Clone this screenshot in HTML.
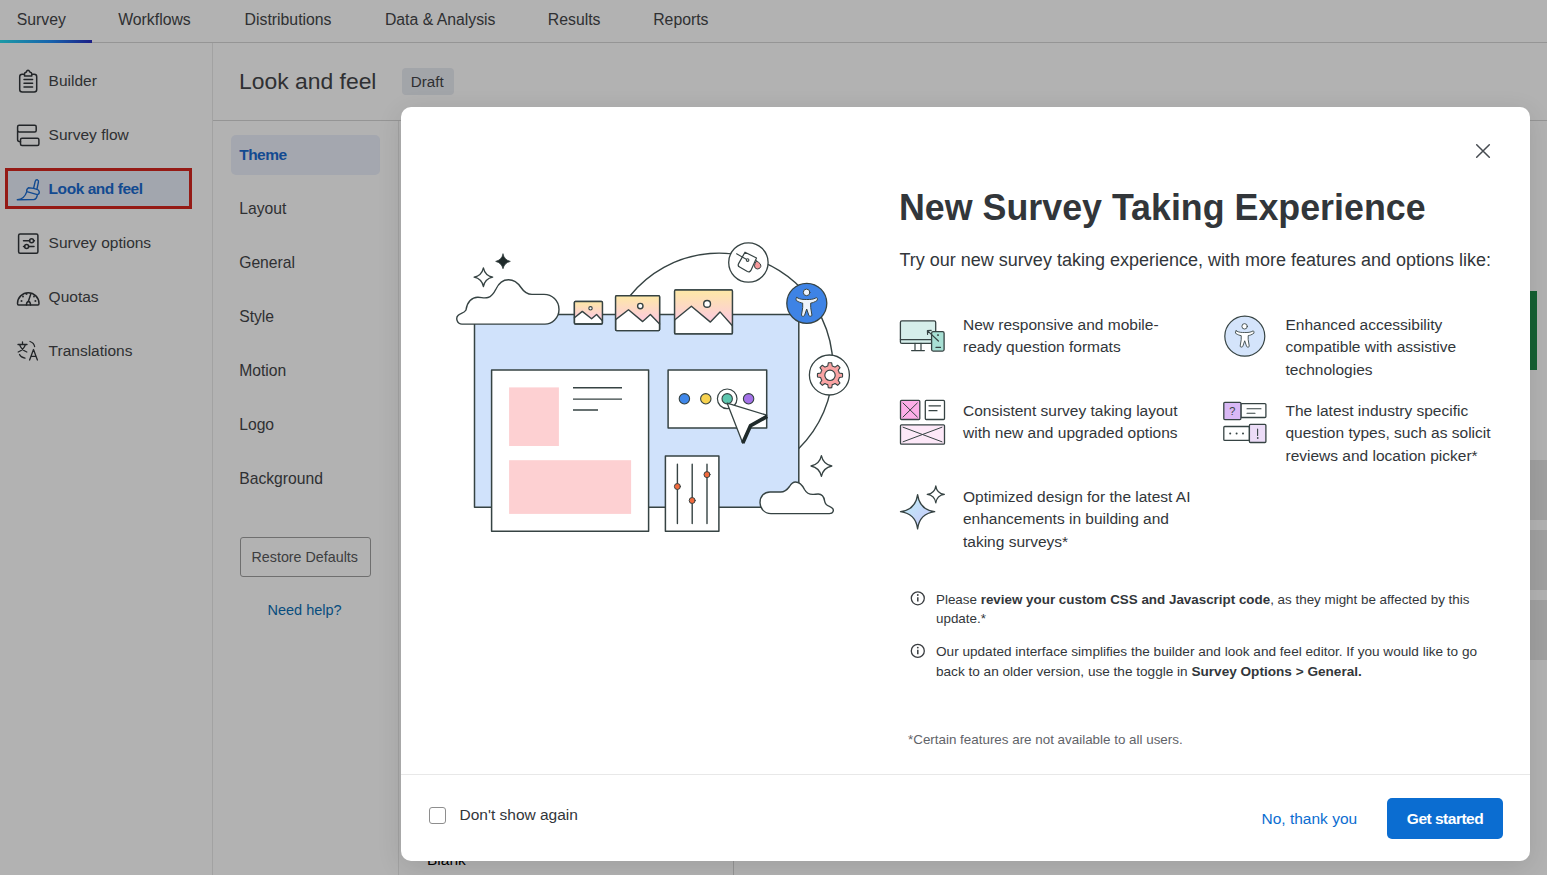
<!DOCTYPE html>
<html><head><meta charset="utf-8">
<style>
*{box-sizing:border-box;margin:0;padding:0}
html,body{width:1547px;height:875px;overflow:hidden;background:#fff;font-family:"Liberation Sans",sans-serif;color:#32363a}
.abs{position:absolute}
#app{position:absolute;left:0;top:0;width:1547px;height:875px;background:#fff}
.nav{position:absolute;left:0;top:0;width:1547px;height:43px;border-bottom:1px solid #dadada}
.nav span{position:absolute;top:11px;font-size:15.5px;color:#32363a;white-space:nowrap}
.side{position:absolute;left:0;top:43px;width:213px;height:832px;border-right:1px solid #e3e3e3}
.si{position:absolute;left:49px;font-size:15.5px;color:#32363a;white-space:nowrap}
.hdr{position:absolute;left:213px;top:43px;width:1334px;height:78px;border-bottom:1px solid #dadada}
.tp{position:absolute;left:213px;top:121px;width:186px;height:754px;border-right:1px solid #e3e3e3}
.ti{position:absolute;left:27px;font-size:15.5px;color:#32363a;white-space:nowrap}
#ov{position:absolute;left:0;top:0;width:1547px;height:875px;background:rgba(0,0,0,0.3)}
#modal{position:absolute;left:401px;top:107.2px;width:1129px;height:754px;background:#fff;border-radius:10px;box-shadow:0 6px 26px rgba(0,0,0,0.11)}
.ft{position:absolute;font-size:15.5px;line-height:22.5px;color:#32363a;white-space:nowrap}
.nt{position:absolute;font-size:13.4px;line-height:19.5px;color:#32363a;white-space:nowrap}
.tx{position:absolute;line-height:1;white-space:nowrap;color:#444649}
</style></head><body>
<div id="app">
<div class="abs" style="left:0;top:42px;width:1547px;height:1px;background:#d6d6d6"></div>
<div class="abs" style="left:212px;top:43px;width:1px;height:832px;background:#e9e9e9"></div>
<div class="abs" style="left:213px;top:120px;width:1334px;height:1px;background:#d6d6d6"></div>
<div class="abs" style="left:398px;top:121px;width:1px;height:754px;background:#e9e9e9"></div>
<div class="tx" style="left:16.7px;top:11.83px;font-size:15.8px">Survey</div>
<div class="tx" style="left:118.2px;top:11.83px;font-size:15.8px">Workflows</div>
<div class="tx" style="left:244.6px;top:11.83px;font-size:15.8px">Distributions</div>
<div class="tx" style="left:384.9px;top:11.83px;font-size:15.8px">Data &amp; Analysis</div>
<div class="tx" style="left:547.8000000000001px;top:11.83px;font-size:15.8px">Results</div>
<div class="tx" style="left:653.2px;top:11.83px;font-size:15.8px">Reports</div>
<div class="abs" style="left:5px;top:168px;width:187px;height:41px;background:#e9eef9"></div>
<svg class="abs" style="left:0;top:0" width="213" height="400" viewBox="0 0 213 400">
<g fill="none" stroke="#32363a" stroke-width="1.5" stroke-linejoin="round" stroke-linecap="round">
<!-- builder clipboard -->
<path d="M24.5,74.2 H22.2 Q19.7,74.2 19.7,76.7 V89.5 Q19.7,92 22.2,92 H34.2 Q36.7,92 36.7,89.5 V76.7 Q36.7,74.2 34.2,74.2 H31.8 M24.5,74.2 Q24.5,72.5 26,72.3 Q27,70.3 28,70.3 Q29,70.3 30.2,72.3 Q31.8,72.5 31.8,74.2 V76 H24.5Z"/>
<path d="M24,79.6 H32.6 M24,83.3 H32.6 M24,87.1 H32.6"/>
<!-- survey flow -->
<rect x="17.6" y="125.2" width="18.6" height="6.8" rx="1.5"/>
<rect x="20.5" y="138.3" width="18.4" height="7.1" rx="1.5"/>
<path d="M17.6,131 V139.8 Q17.6,141.8 20.5,141.8"/>
<!-- brush -->
<path stroke="#1a6bd0" stroke-width="1.4" d="M33.6,188.4 L35.2,181.4 Q35.8,179.4 37.4,179.8 Q38.9,180.3 38.4,182.2 L36.9,189.4"/>
<path stroke="#1a6bd0" stroke-width="1.4" d="M28.4,187.8 Q26.2,189.2 26.8,191.6 L37.4,194.6 Q39.6,194.2 39.2,191.6 Q38.8,189.8 36.9,189.4 L33.6,188.4 Z M26.8,191.6 C25.2,196.5 22.5,199.5 17.3,199.7 L33.5,199.6 Q36.8,199.3 37.4,194.6"/>
<!-- survey options -->
<rect x="18.6" y="234.1" width="19.3" height="19.1" rx="1.5"/>
<path d="M23.5,240.8 H29.6 M33.6,240.8 H34.4 M23.5,246.6 H24.6 M28.6,246.6 H34"/>
<circle cx="31.6" cy="240.8" r="2"/>
<circle cx="26.6" cy="246.6" r="2"/>
<!-- quotas -->
<path d="M18.6,305 Q17.5,305 17.5,303.5 A10.75,10.75 0 0 1 39,303.5 Q39,305 37.9,305 Z"/>
<path d="M26.5,305 Q26.5,301.8 28.3,301.5 L30.8,294"/>
<path d="M28.3,301.5 Q30.5,301.5 30.5,305" />
<circle cx="21.5" cy="301" r="0.4" stroke-width="1.2"/>
<circle cx="23" cy="296.5" r="0.4" stroke-width="1.2"/>
<circle cx="26.5" cy="294" r="0.4" stroke-width="1.2"/>
<circle cx="34" cy="296.5" r="0.4" stroke-width="1.2"/>
<circle cx="35.4" cy="301" r="0.4" stroke-width="1.2"/>
<!-- translations -->
<path d="M18,344.5 H27 M22.5,342 V344.5 M19.5,344.5 Q21.5,350 26.8,352 M25.5,344.5 Q23.5,350 18.2,352" stroke-width="1.3"/>
<path d="M29.6,360 L33.5,349.5 L37.4,360 M31,356.4 H36" stroke-width="1.3"/>
<path d="M30,341.5 Q34,342.8 34.6,346.5" stroke-width="1.3"/>
<path d="M19.5,354.5 Q21,357.5 25,358.2" stroke-width="1.3"/>
</g>
</svg>
<div class="tx" style="left:48.6px;top:73.48px;font-size:15.5px">Builder</div>
<div class="tx" style="left:48.6px;top:127.48px;font-size:15.5px">Survey flow</div>
<div class="tx" style="left:48.6px;top:181.48px;font-size:15.5px;font-weight:700;color:#1a6bd0;letter-spacing:-0.45px">Look and feel</div>
<div class="tx" style="left:48.6px;top:235.48px;font-size:15.5px">Survey options</div>
<div class="tx" style="left:48.6px;top:289.48px;font-size:15.5px">Quotas</div>
<div class="tx" style="left:48.6px;top:343.48px;font-size:15.5px">Translations</div>
<div class="tx" style="left:239px;top:69.8px;font-size:22.9px">Look and feel</div>
<div class="abs" style="left:402px;top:68px;width:52px;height:26.5px;border-radius:4px;background:#e9ecf3"></div>
<div class="tx" style="left:410.8px;top:73.73px;font-size:15.2px">Draft</div>
<div class="abs" style="left:231.4px;top:135px;width:148.2px;height:39.5px;border-radius:5px;background:#ebf0fb"></div>
<div class="tx" style="left:239.2px;top:147.18px;font-size:15.5px;font-weight:700;color:#1a6bd0;letter-spacing:-0.5px">Theme</div>
<div class="tx" style="left:239.2px;top:201.01px;font-size:15.7px">Layout</div>
<div class="tx" style="left:239.2px;top:255.01px;font-size:15.7px">General</div>
<div class="tx" style="left:239.2px;top:309.01px;font-size:15.7px">Style</div>
<div class="tx" style="left:239.2px;top:363.01px;font-size:15.7px">Motion</div>
<div class="tx" style="left:239.2px;top:417.01px;font-size:15.7px">Logo</div>
<div class="tx" style="left:239.2px;top:471.01px;font-size:15.7px">Background</div>
<div class="abs" style="left:239.6px;top:536.5px;width:131.8px;height:40px;border:1px solid #a0a0a0;border-radius:3px"></div>
<div class="tx" style="left:251.5px;top:550.10px;font-size:14.3px;color:#58595b">Restore Defaults</div>
<div class="tx" style="left:267.5px;top:602.73px;font-size:14.5px;color:#0b6fb5">Need help?</div>
<div class="abs" style="left:1530px;top:291px;width:7px;height:79px;background:#1d8a4a"></div>
<div class="abs" style="left:1530px;top:460px;width:17px;height:60px;background:#e6e6e6"></div>
<div class="abs" style="left:1530px;top:530px;width:17px;height:60px;background:#e6e6e6"></div>
<div class="abs" style="left:1530px;top:600px;width:17px;height:60px;background:#e6e6e6"></div>
<div class="tx" style="left:427px;top:852.4px;font-size:15.5px;color:#000">Blank</div>
<div class="abs" style="left:732.5px;top:840px;width:1px;height:35px;background:#d6d6d6"></div>
</div>
<div id="ov"></div>
<div class="abs" style="left:0;top:40px;width:92px;height:3px;background:linear-gradient(90deg,#1c9aa6,#1763ad 55%,#1c1f86)"></div>
<div class="abs" style="left:5.2px;top:168px;width:186.7px;height:40.7px;border:3px solid #951a15"></div>
<div id="modal">
  <svg class="abs" style="left:1073px;top:34.5px" width="18" height="18" viewBox="0 0 18 18"><path d="M2.7 2.7L15.3 15.3M15.3 2.7L2.7 15.3" stroke="#464b51" stroke-width="1.5" stroke-linecap="round"/></svg>
  <div class="abs" style="left:498px;top:83.5px;font-size:35.8px;line-height:1;font-weight:700;color:#32363a;white-space:nowrap;transform:scaleY(1.05);transform-origin:0 30.3px">New Survey Taking Experience</div>
  <div class="abs" style="left:498.5px;top:143.8px;font-size:18px;line-height:1;color:#32363a;white-space:nowrap">Try our new survey taking experience, with more features and options like:</div>
  <div class="ft" style="left:562px;top:206.6px">New responsive and mobile-<br>ready question formats</div>
  <div class="ft" style="left:562px;top:292.6px">Consistent survey taking layout<br>with new and upgraded options</div>
  <div class="ft" style="left:562px;top:378.6px">Optimized design for the latest AI<br>enhancements in building and<br>taking surveys*</div>
  <div class="ft" style="left:884.5px;top:206.6px">Enhanced accessibility<br>compatible with assistive<br>technologies</div>
  <div class="ft" style="left:884.5px;top:292.6px">The latest industry specific<br>question types, such as solicit<br>reviews and location picker*</div>
  <div class="nt" style="left:535px;top:482.6px">Please <b>review your custom CSS and Javascript code</b>, as they might be affected by this<br>update.*</div>
  <div class="nt" style="left:535px;top:535.1px;font-size:13.6px">Our updated interface simplifies the builder and look and feel editor. If you would like to go<br>back to an older version, use the toggle in <b>Survey Options &gt; General.</b></div>
  <div class="abs" style="left:507px;top:626px;font-size:13.4px;line-height:1;color:#5f6368;white-space:nowrap">*Certain features are not available to all users.</div>
  <div class="abs" style="left:0;top:667px;width:1129px;height:1px;background:#e8e8e8"></div>
  <div class="abs" style="left:27.5px;top:700px;width:17px;height:17px;border:1.5px solid #8e8e8e;border-radius:3px"></div>
  <div class="abs" style="left:58.5px;top:700px;font-size:15.5px;line-height:1;color:#32363a;white-space:nowrap">Don't show again</div>
  <div class="abs" style="left:860.5px;top:703.7px;font-size:15.5px;line-height:1;color:#0b6dd1;white-space:nowrap">No, thank you</div>
  <div class="abs" style="left:986px;top:691px;width:116px;height:41px;border-radius:5px;background:#0b6dd1;color:#fff;font-size:15.5px;font-weight:700;letter-spacing:-0.5px;line-height:41px;text-align:center">Get started</div>
</div>
<!--ILLUS-->
<svg class="abs" style="left:0;top:0;pointer-events:none" width="1547" height="875" viewBox="0 0 1547 875">
<defs>
<linearGradient id="gimg" x1="0" y1="0" x2="0" y2="1"><stop offset="0" stop-color="#fde8a6"/><stop offset="0.75" stop-color="#fdcfd6"/></linearGradient>
<linearGradient id="gsp" x1="0" y1="0" x2="1" y2="1"><stop offset="0" stop-color="#bff4f6"/><stop offset="1" stop-color="#cbc3fb"/></linearGradient>
</defs>
<g fill="none" stroke="#364343" stroke-width="1.4" stroke-linejoin="round" stroke-linecap="round">
<!-- big arc -->
<path d="M630.1,295.7 A114,114 0 1 1 798.8,448.5"/>
<!-- blue rect -->
<rect x="474.5" y="314.4" width="324.3" height="192.8" fill="#d0e2fb" stroke-width="1.5"/>
<!-- cloud 1 -->
<path fill="#fff" d="M462,324.1 C457,324.1 455.5,318 458,315.5 C460,313 464,313.5 466,310 C467,302 472,297 478,297.2 C482,297.3 484,298.5 488,297.5 C492,296.5 494,293 496,289 C499,282.5 504,279.7 508.5,279.7 C514,279.7 518,283 521,287.5 C524,292 527,294.4 532,294.4 L544,294.4 C552,294.4 559,300.5 559,309.5 C559,318 552,324.1 545,324.1 Z"/>
<!-- sparkles -->
<path d="M483.4,267.9 Q485,275.6 492.7,277.2 Q485,278.8 483.4,286.5 Q481.8,278.8 474.1,277.2 Q481.8,275.6 483.4,267.9Z" stroke-width="1.3"/>
<path fill="#1f2a2a" d="M503,254.1 Q504.4,260 510.3,261.4 Q504.4,262.8 503,268.7 Q501.6,262.8 495.7,261.4 Q501.6,260 503,254.1Z" stroke-width="0.8"/>
<!-- images -->
<rect x="574.4" y="301.5" width="28" height="22.5" rx="1" fill="#fff"/>
<path d="M574.4,301.5 H602.4 V320.7 L596.6,314.5 L591.6,318.8 L582.3,311.4 L574.4,317.7Z" fill="url(#gimg)" stroke="none"/>
<rect x="574.4" y="301.5" width="28" height="22.5" rx="1"/>
<path d="M574.4,317.7 L582.3,311.4 L591.6,318.8 L596.6,314.5 L602.4,320.7"/>
<circle cx="590.5" cy="308.3" r="1.7" fill="#fff" stroke-width="1.1"/>
<rect x="615.6" y="295.7" width="44" height="34.9" rx="1" fill="#fff"/>
<path d="M615.6,295.7 H659.6 V324 L650.4,314.5 L642.7,321.6 L628.5,309.7 L615.6,319.6Z" fill="url(#gimg)" stroke="none"/>
<rect x="615.6" y="295.7" width="44" height="34.9" rx="1"/>
<path d="M615.6,319.6 L628.5,309.7 L642.7,321.6 L650.4,314.5 L659.6,324"/>
<circle cx="640.3" cy="306.1" r="2.7" fill="#fff"/>
<rect x="674.6" y="290" width="57.8" height="43.9" rx="1" fill="#fff"/>
<path d="M674.6,290 H732.4 V325.7 L720,311.9 L710.4,322.1 L691.4,306.2 L674.6,320Z" fill="url(#gimg)" stroke="none"/>
<rect x="674.6" y="290" width="57.8" height="43.9" rx="1"/>
<path d="M674.6,320 L691.4,306.2 L710.4,322.1 L720,311.9 L732.4,325.7"/>
<circle cx="707.1" cy="303.9" r="3.4" fill="#fff"/>
<!-- bucket circle -->
<circle cx="748.4" cy="262.5" r="19.7" fill="#fff" stroke-width="1.3"/>
<path d="M745,252.2 L756.5,258 L750.9,270.4 Q749.7,272.7 747.4,271.5 L739.6,267.1 Q737.4,265.9 738.6,263.6 Z" stroke-width="1.2"/>
<path d="M736.6,253.8 L747.6,260.1" stroke-width="1.1"/>
<circle cx="747.6" cy="260.1" r="1.3" fill="#fff" stroke-width="1.1"/>
<path d="M756.4,261 Q761.5,263.5 760.8,266.5 Q760,269.2 757.2,269 Q754.4,268.6 754.5,265.8 Q754.6,263.5 756.4,261Z" fill="#f7999b" stroke-width="1"/>
<!-- accessibility circle -->
<circle cx="806.8" cy="303.3" r="20" fill="#3e83e5" stroke-width="1.3"/>
<g id="a11y">
<circle cx="806.6" cy="292.4" r="3.3" fill="#eef3fb" stroke-width="1"/>
<path fill="#eef3fb" stroke-width="1" d="M796.8,297.6 C800.5,299.6 803,299.5 806.7,299.5 C810.4,299.5 812.9,299.6 816.6,297.6 Q818,298.6 817.2,300.4 C814.5,302.2 812.5,302.8 810.7,303.1 L810.7,307.6 L811.9,315 Q812,316 811,316.2 L809.8,316.2 Q809,316 808.8,315.2 L806.7,309 L804.6,315.2 Q804.4,316 803.6,316.2 L802.4,316.2 Q801.4,316 801.5,315 L802.7,307.6 L802.7,303.1 C800.9,302.8 798.9,302.2 796.2,300.4 Q795.4,298.6 796.8,297.6Z"/>
</g>
<!-- gear circle -->
<circle cx="829.4" cy="375" r="20" fill="#fff" stroke-width="1.3"/>
<path fill="#f9a3a3" stroke-width="1.1" d="M827.76,365.97 L828.32,362.81 A12.6,12.6 0 0 1 831.68,362.81 L832.24,365.97 A9.6,9.6 0 0 1 835.02,367.11 L837.64,365.28 A12.6,12.6 0 0 1 840.02,367.66 L838.19,370.28 A9.6,9.6 0 0 1 839.33,373.06 L842.49,373.62 A12.6,12.6 0 0 1 842.49,376.98 L839.33,377.54 A9.6,9.6 0 0 1 838.19,380.32 L840.02,382.94 A12.6,12.6 0 0 1 837.64,385.32 L835.02,383.49 A9.6,9.6 0 0 1 832.24,384.63 L831.68,387.79 A12.6,12.6 0 0 1 828.32,387.79 L827.76,384.63 A9.6,9.6 0 0 1 824.98,383.49 L822.36,385.32 A12.6,12.6 0 0 1 819.98,382.94 L821.81,380.32 A9.6,9.6 0 0 1 820.67,377.54 L817.51,376.98 A12.6,12.6 0 0 1 817.51,373.62 L820.67,373.06 A9.6,9.6 0 0 1 821.81,370.28 L819.98,367.66 A12.6,12.6 0 0 1 822.36,365.28 L824.98,367.11 A9.6,9.6 0 0 1 827.76,365.97Z"/>
<circle cx="830" cy="375.3" r="5.2" fill="#fff" stroke-width="1.2"/>
<!-- doc -->
<rect x="491.6" y="369.9" width="157" height="161.3" fill="#fff" stroke-width="1.5"/>
<rect x="509.1" y="387.4" width="49.8" height="58.6" fill="#fdd0d2" stroke="none"/>
<rect x="509.1" y="460.2" width="122" height="53.7" fill="#fdd0d2" stroke="none"/>
<path d="M573,387.8 H622 M573,399.1 H622 M573,410 H598" stroke-width="1.4" stroke-linecap="butt"/>
<!-- color box -->
<rect x="668.1" y="369.9" width="98.6" height="58" fill="#fff" stroke-width="1.5"/>
<circle cx="684.4" cy="398.8" r="5.2" fill="#3f87ea" stroke-width="1.1"/>
<circle cx="705.8" cy="398.8" r="5.2" fill="#f7d24f" stroke-width="1.1"/>
<circle cx="727.2" cy="398.8" r="5.2" fill="#5cc6ae" stroke-width="1.1"/>
<circle cx="727.2" cy="398.8" r="9.8" stroke-width="1.2"/>
<circle cx="748.6" cy="398.8" r="5.2" fill="#a472e8" stroke-width="1.1"/>
<!-- cursor -->
<path d="M727.2,403.2 L766.8,415.2 L750.8,425.2 L742.8,443.2Z" fill="#fff" stroke-width="1.3"/>
<path d="M742.8,443 L750.6,425.6 L767.2,416.4" stroke="#1f2a2a" stroke-width="3.7" stroke-linecap="butt"/>
<!-- sliders -->
<rect x="665.4" y="456.1" width="53.5" height="75.1" fill="#fff" stroke-width="1.5"/>
<path d="M677.4,464.3 V523.6 M692.2,464.3 V523.6 M707,464.3 V523.6" stroke-width="1.4"/>
<circle cx="677.4" cy="486.5" r="3" fill="#f26a3d" stroke-width="1"/>
<circle cx="692.2" cy="500.5" r="3" fill="#f26a3d" stroke-width="1"/>
<circle cx="707" cy="474.6" r="3" fill="#f26a3d" stroke-width="1"/>
<!-- sparkle right -->
<path d="M821.4,455.6 Q823.2,464.2 831.8,466 Q823.2,467.8 821.4,476.4 Q819.6,467.8 811,466 Q819.6,464.2 821.4,455.6Z" stroke-width="1.3"/>
<!-- cloud 2 -->
<path fill="#fff" d="M771,513.6 C764,513.6 760,508 760,502.8 C760,496 764.5,492 770,492 L780.6,492 C785,492 787,490 789.5,486.5 C791,484 793,482 795.5,482 C799.5,482 802,484.5 804.5,489.5 C806.5,493 809,494.4 812.6,494.4 C814.5,494.4 816.5,494 818.2,494 C822,494 824,497 824.6,501 C825.2,504.5 827,505.5 829.4,506.3 C832.5,507.5 834,509.5 833,511.7 C832.5,513 831.5,513.6 829.4,513.6Z"/>
</g>
</svg>
<svg class="abs" style="left:0;top:0;pointer-events:none" width="1547" height="875" viewBox="0 0 1547 875">
<g fill="none" stroke="#364343" stroke-width="1.3" stroke-linejoin="round" stroke-linecap="round">
<!-- monitor -->
<rect x="900.4" y="320.9" width="35.3" height="22.5" rx="1.5" fill="#d5eeea"/>
<path d="M900.4,339.7 H935.7" stroke-width="1.2"/>
<path d="M915,343.4 V350.6 M921,343.4 V350.6 M911.6,350.6 H924.4" stroke-width="1.2"/>
<rect x="931.6" y="331.7" width="12.5" height="19.4" rx="1.5" fill="#a8e0d4"/>
<path d="M936,347.4 H940.5" stroke-width="1.2"/>
<circle cx="937.9" cy="335.1" r="0.5" fill="#364343" stroke-width="0.8"/>
<path d="M938.4,341 L927.4,330.6 M927.4,330.6 L927.6,334.4 M927.4,330.6 L931.2,330.4" stroke-width="1.2"/>
<!-- layout -->
<rect x="900.5" y="400.4" width="19.3" height="19.1" rx="1" fill="#fcaee8"/>
<path d="M903,403 L917.3,417 M917.3,403 L903,417" stroke-width="1"/>
<rect x="925.3" y="400.4" width="19.2" height="19.1" rx="1" fill="#fff"/>
<path d="M929,405.8 H940.5 M929,410.7 H937" stroke-width="1.2"/>
<rect x="900.5" y="424.8" width="44" height="19.4" rx="1" fill="#fde8f8"/>
<path d="M903,427.2 L942,441.8 M942,427.2 L903,441.8" stroke-width="1"/>
<!-- sparkles -->
<path d="M917.6,494.6 Q919.6,509.7 934.7,511.7 Q919.6,513.7 917.6,528.8 Q915.6,513.7 900.5,511.7 Q915.6,509.7 917.6,494.6Z" fill="url(#gsp2)"/>
<path d="M935.8,485.8 Q936.8,493.4 944.4,494.4 Q936.8,495.4 935.8,503 Q934.8,495.4 927.2,494.4 Q934.8,493.4 935.8,485.8Z" fill="#fff" stroke-width="1.2"/>
<!-- a11y small -->
<circle cx="1244.8" cy="336.2" r="20" fill="#d4e4fb" stroke-width="1.2"/>
<g transform="translate(542.87,71.95) scale(0.87)">
<circle cx="806.6" cy="292.4" r="3.1" fill="#fff" stroke-width="1"/>
<path fill="#fff" stroke-width="1" d="M796.8,297.6 C800.5,299.6 803,299.5 806.7,299.5 C810.4,299.5 812.9,299.6 816.6,297.6 Q818,298.6 817.2,300.4 C814.5,302.2 812.5,302.8 810.7,303.1 L810.7,307.6 L811.9,315 Q812,316 811,316.2 L809.8,316.2 Q809,316 808.8,315.2 L806.7,309 L804.6,315.2 Q804.4,316 803.6,316.2 L802.4,316.2 Q801.4,316 801.5,315 L802.7,307.6 L802.7,303.1 C800.9,302.8 798.9,302.2 796.2,300.4 Q795.4,298.6 796.8,297.6Z"/>
</g>
<!-- q types -->
<rect x="1240.9" y="403.6" width="25" height="13.9" rx="1" fill="#fff"/>
<path d="M1247,408.7 H1261 M1247,413.2 H1255" stroke-width="1.1"/>
<rect x="1223.8" y="402.3" width="17.1" height="17.3" rx="1" fill="#d9b8f5"/>
<text x="1232.3" y="415.3" font-family="Liberation Sans" font-size="11" fill="#364343" stroke="none" text-anchor="middle">?</text>
<rect x="1223.8" y="426.5" width="25.6" height="13.9" rx="1" fill="#fff"/>
<circle cx="1230.2" cy="433.5" r="1" fill="#364343" stroke="none"/>
<circle cx="1236.6" cy="433.5" r="1" fill="#364343" stroke="none"/>
<circle cx="1243" cy="433.5" r="1" fill="#364343" stroke="none"/>
<rect x="1249.4" y="424.4" width="16.5" height="18.1" rx="1" fill="#ecdcf7"/>
<path d="M1257.6,429 V435.5" stroke-width="1.1"/>
<circle cx="1257.6" cy="438" r="0.4" fill="#364343" stroke-width="0.9"/>
<!-- info icons -->
<circle cx="917.8" cy="598.3" r="6.5" stroke="#3a3d41" stroke-width="1.3"/>
<path d="M917.8,597.2 V601.6" stroke="#3a3d41" stroke-width="1.5" stroke-linecap="butt"/>
<circle cx="917.8" cy="595" r="0.9" fill="#3a3d41" stroke="none"/>
<circle cx="917.8" cy="650.9" r="6.5" stroke="#3a3d41" stroke-width="1.3"/>
<path d="M917.8,649.8 V654.2" stroke="#3a3d41" stroke-width="1.5" stroke-linecap="butt"/>
<circle cx="917.8" cy="647.6" r="0.9" fill="#3a3d41" stroke="none"/>
</g>
<defs><linearGradient id="gsp2" x1="0" y1="0" x2="1" y2="1"><stop offset="0" stop-color="#bdf3f7"/><stop offset="1" stop-color="#cbc3fb"/></linearGradient></defs>
</svg>
<!--/ILLUS-->
</body></html>
